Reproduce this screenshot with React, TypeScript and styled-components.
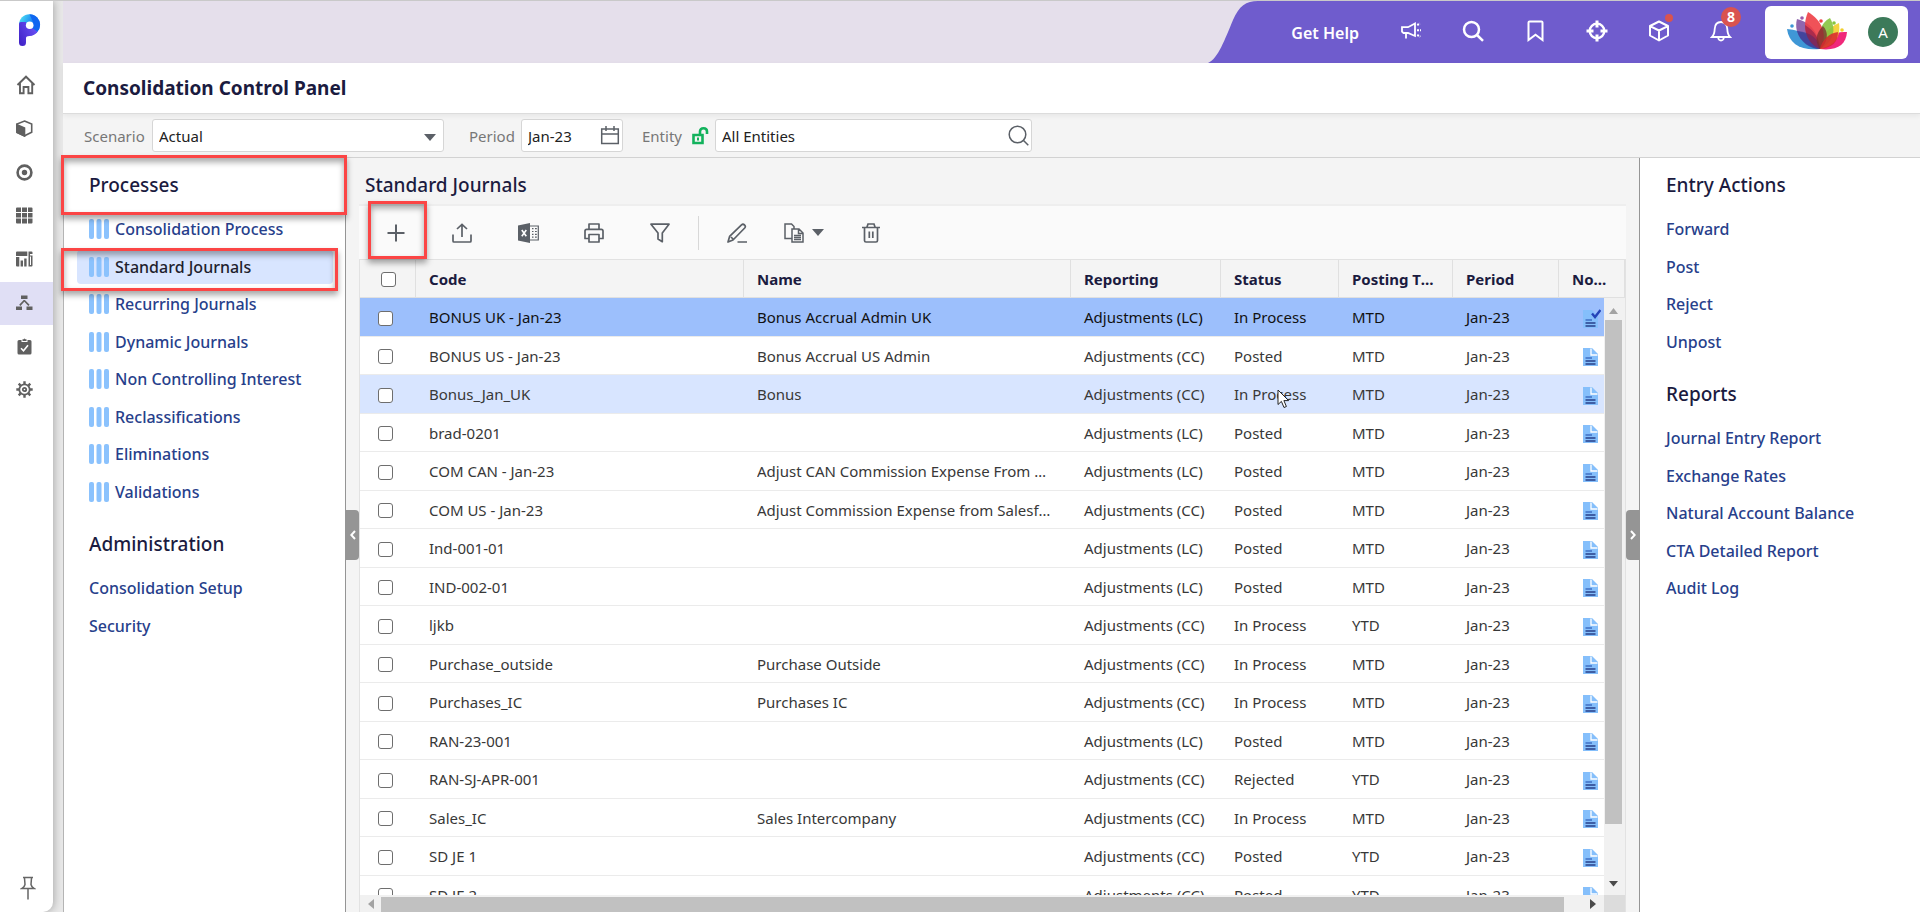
import React from "react";
import styled, { createGlobalStyle, css } from "styled-components";

const GlobalStyle = createGlobalStyle`
  *, *::before, *::after { box-sizing: border-box; }
  body {
    margin: 0;
    background: #f4f4f4;
    font-family: "Noto Sans", "Open Sans", sans-serif;
    font-size: 15px;
    color: #333;
  }
  button, input, select { font: inherit; color: inherit; }
  h1, h2, ul { margin: 0; padding: 0; }
`;

/* ---------- shell ---------- */

const Shell = styled.div`
  display: flex;
  height: 100vh;
  overflow: hidden;
  border-top: 1px solid #c9c9c9;
  background: #e8e8e8;
`;

const Rail = styled.nav`
  display: flex;
  flex-direction: column;
  flex: none;
  width: 53px;
  margin-right: 10px;
  background: #fff;
  border-bottom-right-radius: 10px;
  box-shadow: 1px 0 8px rgba(0, 0, 0, 0.28);
  z-index: 1;
`;

const LogoLink = styled.a`
  display: flex;
  height: 63px;
  padding: 13px 0 0 19px;
`;

const RailList = styled.ul`
  flex: 1;
  list-style: none;
`;

const RailItem = styled.li<{ $active?: boolean }>`
  height: 44px;
  background: ${(p) => (p.$active ? "#e0dff5" : "transparent")};
  &:nth-child(even) { height: 43px; }
`;

const RailLink = styled.a`
  display: flex;
  align-items: center;
  height: 100%;
  padding: 0 0 2px 16px;
  color: #606060;
`;

const PinButton = styled.button`
  display: flex;
  margin: 0 0 12px 20px;
  padding: 0;
  width: 16px;
  border: 0;
  background: none;
  color: #666;
`;

const Page = styled.div`
  display: flex;
  flex-direction: column;
  flex: 1;
  min-width: 0;
`;

/* ---------- banner ---------- */

const Banner = styled.header`
  display: flex;
  flex: none;
  justify-content: flex-end;
  height: 62px;
  background: #e5dfeb;
`;

const Wave = styled.svg`
  flex: none;
  width: 50px;
  height: 62px;
  fill: #6f5ccd;
`;

const BannerTools = styled.div`
  display: flex;
  align-items: center;
  background: #6f5ccd;
  padding: 0 12px 0 34px;
  margin-left: -1px;
  color: #fff;
`;

const HelpLink = styled.a`
  margin-right: 21px;
  color: #fff;
  font-size: 16px;
  font-weight: 600;
  text-decoration: none;
  white-space: nowrap;
  padding-top: 2px;
`;

const BannerButton = styled.button`
  position: relative;
  display: flex;
  align-items: center;
  justify-content: center;
  width: 62px;
  height: 62px;
  padding: 0 0 2px;
  border: 0;
  background: none;
  color: #fff;
`;

const Dot = styled.span`
  position: absolute;
  top: 13px;
  left: 37px;
  width: 8px;
  height: 8px;
  border-radius: 50%;
  background: #d9534f;
`;

const Badge = styled.span`
  position: absolute;
  top: 6px;
  left: 31px;
  width: 20px;
  height: 20px;
  border-radius: 50%;
  background: #d9534f;
  font-size: 14px;
  line-height: 20px;
  font-weight: 700;
  text-align: center;
`;

const AccountCard = styled.div`
  display: flex;
  align-items: center;
  width: 143px;
  height: 53px;
  margin-left: 13px;
  padding-left: 22px;
  gap: 19px;
  background: #fff;
  border-radius: 6px;
`;

const Avatar = styled.button`
  width: 30px;
  height: 30px;
  padding: 0;
  border: 0;
  border-radius: 50%;
  background: #3c7a5a;
  color: #fff;
  font-size: 15px;
`;

/* ---------- title and filters ---------- */

const TitleBar = styled.div`
  flex: none;
  display: flex;
  align-items: center;
  height: 51px;
  padding-left: 20px;
  background: #fff;
  border-bottom: 1px solid #dcdcdc;
  box-shadow: 0 2px 5px rgba(0, 0, 0, 0.06);
  z-index: 1;
`;

const Title = styled.h1`
  font-size: 19px;
  line-height: 26px;
  font-weight: 700;
  color: #1b1b3f;
`;

const FilterBar = styled.form`
  flex: none;
  display: flex;
  align-items: center;
  height: 44px;
  padding-left: 21px;
  background: #f4f4f4;
  border-bottom: 1px solid #d2d2d2;
`;

const FilterLabel = styled.label<{ $width: number; $before?: number }>`
  width: ${(p) => p.$width}px;
  margin-left: ${(p) => p.$before ?? 0}px;
  color: #777;
  white-space: nowrap;
`;

const Field = styled.div<{ $width: number }>`
  position: relative;
  width: ${(p) => p.$width}px;
  height: 33px;
  color: #5b6067;
  > svg { position: absolute; right: 3px; top: 6px; pointer-events: none; }
  > svg.caret { right: 8px; top: 15px; }
`;

const fieldBox = css`
  width: 100%;
  height: 100%;
  padding: 0 6px;
  border: 1px solid #d6d6d6;
  border-radius: 3px;
  background: #fff;
  color: #222;
  appearance: none;
  outline: none;
`;
const Select = styled.select`${fieldBox}`;
const TextInput = styled.input`${fieldBox}`;

const LockButton = styled.button`
  display: flex;
  width: 23px;
  padding: 0;
  border: 0;
  background: none;
`;

/* ---------- work area ---------- */

const Work = styled.div`
  display: flex;
  flex: 1;
  min-height: 0;
  border-left: 1px solid #b4b4b4;
`;

const SidePanel = styled.aside<{ $side: "left" | "right" }>`
  flex: none;
  width: ${(p) => (p.$side === "left" ? 282 : 281)}px;
  padding-top: 2px;
  background: #fff;
  ${(p) => (p.$side === "left" ? "border-right" : "border-left")}: 1px solid #959595;
`;

const Section = styled.section<{ $indent: number }>`
  margin-bottom: 9px;
  --indent: ${(p) => p.$indent}px;
`;

const SectionTitle = styled.h2`
  position: relative;
  padding-left: var(--indent);
  font-size: 19px;
  line-height: 50px;
  font-weight: 500;
  color: #1b1b3f;
`;

const LinkList = styled.ul`
  list-style: none;
`;

const LinkItem = styled.li`
  position: relative;
  height: 38px;
  padding: 2px 12px 0 13px;
  &:nth-child(even) { height: 37px; }
`;

const ProcessLink = styled.a<{ $active?: boolean; $inset: number }>`
  display: flex;
  align-items: center;
  gap: 6px;
  height: 34px;
  padding-left: ${(p) => p.$inset}px;
  border-radius: 4px;
  background: ${(p) => (p.$active ? "#d8e5ff" : "transparent")};
  color: ${(p) => (p.$active ? "#1f1f2e" : "#27408b")};
  font-size: 16px;
  line-height: 22px;
  font-weight: 500;
  text-decoration: none;
  white-space: nowrap;
`;

const Highlight = styled.span<{ $inset: string }>`
  position: absolute;
  inset: ${(p) => p.$inset};
  border: 3px solid #fb4545;
  box-shadow: 0 4px 6px rgba(0, 0, 0, 0.35), inset 0 4px 6px rgba(0, 0, 0, 0.35);
  pointer-events: none;
  z-index: 2;
`;

const Gutter = styled.div`
  flex: none;
  display: flex;
  align-items: center;
  width: 13px;
  background: #f4f4f4;
`;

const GutterHandle = styled.button<{ $side: "left" | "right" }>`
  display: flex;
  align-items: center;
  justify-content: center;
  width: 13px;
  height: 50px;
  padding: 0;
  border: 0;
  border-radius: ${(p) => (p.$side === "left" ? "0 4px 4px 0" : "4px 0 0 4px")};
  background: #959595;
  color: #fff;
`;

const Center = styled.main`
  display: flex;
  flex-direction: column;
  flex: 1;
  min-width: 0;
  background: #f4f4f4;
`;

const CenterTitle = styled.h2`
  flex: none;
  padding: 2px 0 0 6px;
  height: 46px;
  font-size: 19px;
  line-height: 50px;
  font-weight: 500;
  color: #1b1b3f;
`;

const Toolbar = styled.div`
  flex: none;
  display: flex;
  align-items: center;
  height: 55px;
  padding-left: 4px;
  background: #fafafa;
  border-top: 2px solid #eee;
`;

const ToolButton = styled.button<{ $wide?: boolean }>`
  position: relative;
  display: flex;
  align-items: center;
  justify-content: center;
  gap: 8px;
  width: ${(p) => (p.$wide ? 68 : 66)}px;
  height: 52px;
  padding: 0;
  border: 0;
  background: none;
  color: #5b6067;
`;

const ToolDivider = styled.span`
  width: 1px;
  height: 34px;
  margin: 0 5px;
  background: #d8d8d8;
`;

/* ---------- grid ---------- */

const Grid = styled.div`
  flex: 1;
  min-height: 0;
  display: flex;
  flex-direction: column;
  border: 1px solid #e2e2e2;
  border-bottom: 0;
`;

const Table = styled.table`
  width: 100%;
  table-layout: fixed;
  border-collapse: separate;
  border-spacing: 0;
`;

const HeadCell = styled.th`
  height: 38px;
  padding: 0 12px 0 13px;
  border-right: 1px solid #e0e0e0;
  border-bottom: 1px solid #e0e0e0;
  font-weight: 700;
  font-size: 15px;
  line-height: 22px;
  text-align: left;
  color: #1b1b3f;
  overflow: hidden;
  text-overflow: ellipsis;
  white-space: nowrap;
`;

const BodyCell = styled.td`
  position: relative;
  padding: 0 12px 0 13px;
  border-bottom: 1px solid #ebebeb;
  line-height: 22px;
  white-space: nowrap;
`;

const Clip = styled.div`
  margin-right: 6px;
  overflow: hidden;
  text-overflow: ellipsis;
`;

const Row = styled.tr<{ $tone?: "selected" | "hover" }>`
  height: 39px;
  background: ${(p) => (p.$tone === "selected" ? "#9cbffc" : p.$tone === "hover" ? "#d8e5ff" : "#fff")};
  color: ${(p) => (p.$tone === "selected" ? "#111" : "#383838")};
  &:nth-child(even) { height: 38px; }
`;

const Check = styled.input<{ $shift: number }>`
  display: block;
  width: 15px;
  height: 15px;
  margin: 2px 0 0 ${(p) => p.$shift}px;
  appearance: none;
  border: 1px solid #6e6e6e;
  border-radius: 3px;
  background: #fff;
`;

const NoteButton = styled.button`
  display: flex;
  margin: 3px 0 0 11px;
  padding: 0;
  border: 0;
  background: none;
`;

const Pointer = styled.svg`
  position: absolute;
  left: 56px;
  top: 14px;
`;

const GridBody = styled.div`
  flex: 1;
  min-height: 0;
  display: flex;
`;

const Viewport = styled.div`
  flex: 1;
  min-width: 0;
  overflow: hidden;
  background: #fff;
`;

const Track = styled.div<{ $vertical?: boolean }>`
  flex: none;
  display: flex;
  align-items: center;
  flex-direction: ${(p) => (p.$vertical ? "column" : "row")};
  ${(p) => (p.$vertical ? "width: 21px; padding: 10px 3px 0 1px;" : "height: 17px; flex: 1;")}
  background: #f1f1f1;
`;

const Thumb = styled.div<{ $vertical?: boolean }>`
  flex: ${(p) => (p.$vertical ? "505" : "1184")};
  ${(p) => (p.$vertical ? "width: 17px; margin-top: 6px;" : "height: 15px; margin-top: 2px;")}
  background: #c1c1c1;
`;

const Rest = styled.div<{ $size: number }>`
  flex: ${(p) => p.$size};
`;

const ArrowBox = styled.span<{ $w: number; $h: number }>`
  flex: none;
  display: flex;
  align-items: center;
  justify-content: center;
  width: ${(p) => p.$w}px;
  height: ${(p) => p.$h}px;
`;

const BottomBar = styled.div`
  flex: none;
  display: flex;
`;

const Corner = styled.div`
  width: 21px;
  background: #dcdcdc;
`;

/* ---------- icons ---------- */

type IconProps = { w?: number; h?: number; box?: string; sw?: number; fill?: string; children: React.ReactNode };
const Icon = ({ w = 20, h = 20, box, sw = 1.5, fill = "none", children }: IconProps) => (
  <svg width={w} height={h} viewBox={box ?? `0 0 ${w} ${h}`} fill={fill} stroke={fill === "none" ? "currentColor" : "none"} strokeWidth={sw} aria-hidden="true">
    {children}
  </svg>
);
const Solid = (p: IconProps) => <Icon fill="currentColor" {...p} />;

const Logo = () => (
  <svg width="22" height="32" viewBox="0 0 22 32" aria-hidden="true">
    <defs>
      <linearGradient id="bowl" x1="0" y1="0.2" x2="1" y2="0.7">
        <stop offset="0" stopColor="#4fe3f2" />
        <stop offset="0.5" stopColor="#1f8df5" />
        <stop offset="1" stopColor="#1257ee" />
      </linearGradient>
      <linearGradient id="stem" x1="0" y1="1" x2="1" y2="0.3">
        <stop offset="0" stopColor="#3d1fc4" />
        <stop offset="1" stopColor="#6b52f5" />
      </linearGradient>
    </defs>
    <circle cx="10.5" cy="10.8" r="10.6" fill="url(#bowl)" />
    <path d="M10.5 0.2 A10.6 10.6 0 0 1 18 18 L13 13.5 L14 8 Z" fill="#0f66f0" />
    <path d="M0 10 Q0 8 2 8 H7 V11 A4 4 0 0 0 13 14 L18.6 17.8 A10.6 10.6 0 0 1 10.5 22 Q7 22 7 24 V28.5 Q7 32 3.5 32 Q0 32 0 28.5Z" fill="url(#stem)" />
    <circle cx="10.7" cy="11.2" r="3.8" fill="#fff" />
  </svg>
);

const Lotus = () => (
  <svg width="62" height="40" viewBox="0 0 62 40" role="img" aria-label="Company logo">
    <path d="M0 17 C2 32 14 39 33 37 C28 26 16 18 0 17Z" fill="#3f97d6" />
    <path d="M60 20 C47 19 37 26 33 37 C50 39 59 33 60 20Z" fill="#f0287a" />
    <path d="M10 7 C6 22 17 35 33 37 C33 22 23 10 10 7Z" fill="#7d4ba0" opacity="0.85" />
    <path d="M52 11 C40 16 33 26 33 37 C48 34 54 24 52 11Z" fill="#f2cf2e" opacity="0.9" />
    <path d="M43 6 C34 10 28 26 33 37 C46 30 50 18 43 6Z" fill="#86c440" opacity="0.9" />
    <path d="M21 0 C14 16 20 30 33 37 C42 22 34 8 21 0Z" fill="#ee3f46" opacity="0.9" />
    <path d="M10 19 C13 30 23 37 33 37 C32 28 25 20 10 19Z" fill="#2c3c97" opacity="0.7" />
    <path d="M18 13 C18 26 25 34 33 37 C33 28 28 19 18 13Z" fill="#8c1f4a" opacity="0.65" />
    <path d="M36 14 C28 22 28 30 33 37 C41 31 42 20 36 14Z" fill="#7a2f2e" opacity="0.75" />
    <path d="M51 20 C42 21 35 28 33 37 C45 36 51 30 51 20Z" fill="#d9262e" opacity="0.85" />
    <circle cx="5" cy="14" r="1.8" fill="#3f97d6" />
    <circle cx="15" cy="6" r="1.8" fill="#9a5cab" />
    <circle cx="34" cy="9" r="1.8" fill="#ee3f46" />
    <circle cx="47" cy="11" r="1.8" fill="#86c440" />
    <circle cx="55" cy="18" r="1.8" fill="#f2cf2e" />
  </svg>
);

const Bars = () => (
  <svg width="20" height="20" viewBox="0 0 20 20" fill="#8bc2fd" aria-hidden="true">
    <rect x="0" width="5" height="20" rx="2" />
    <rect x="7.5" width="5" height="20" rx="2" />
    <rect x="15" width="5" height="20" rx="2" />
  </svg>
);

const NoteIcon = ({ checked }: { checked?: boolean }) => (
  <svg width="18" height="20" viewBox="0 0 18 20" aria-hidden="true">
    <path d="M0 1 H9 L15 7 V19 H0Z" fill="#85bffb" />
    {!checked && <path d="M8 1.5 V8 H14.5" fill="none" stroke="#fff" strokeWidth="1.3" />}
    <path d="M2.5 11 H9" stroke="#3f6fc4" strokeWidth="1.5" />
    <path d="M2.5 14 H12.5 M2.5 17 H12.5" stroke="#27408b" strokeWidth="1.5" />
    {checked && <path d="M9 4.5 L12 8 L17.5 1" fill="none" stroke="#2545b8" strokeWidth="2.4" />}
  </svg>
);

const Caret = ({ className }: { className?: string }) => (
  <svg className={className} width="12" height="7" viewBox="0 0 12 7" fill="#5b6067" aria-hidden="true">
    <path d="M0 0 H12 L6 7Z" />
  </svg>
);

const railIcons: { label: string; icon: React.ReactNode }[] = [
  { label: "Home", icon: <Icon w={20} h={20} sw={1.9}><path d="M1.5 10 L10 1.7 L18.5 10 M4 8 V18.2 H7.6 V12 H12.4 V18.2 H16.2 V8" /></Icon> },
  { label: "Models", icon: <Icon w={17} h={17} sw={1.6}><path d="M8.5 1 L15.7 4 V12.3 L8.5 15.8 L1 12.3 V4Z" /><path d="M0.5 4.5 L8.5 8 V16 L1 12.5Z" fill="currentColor" /></Icon> },
  { label: "Goals", icon: <Icon w={17} h={17} sw={2.6}><circle cx="8.5" cy="8.5" r="6.9" /><circle cx="8.5" cy="8.5" r="2.7" fill="currentColor" stroke="none" /></Icon> },
  { label: "Sheets", icon: <Solid w={17} h={17}><path d="M0 1.5Q0 .5 1 .5H5V5H0ZM6 .5H11V5H6ZM12 .5H15.5Q16.5 .5 16.5 1.5V5H12ZM0 6H5V10.5H0ZM6 6H11V10.5H6ZM12 6H16.5V10.5H12ZM0 11.5H5V16.5H1Q0 16.5 0 15.5ZM6 11.5H11V16.5H6ZM12 11.5H16.5V15.5Q16.5 16.5 15.5 16.5H12Z" /></Solid> },
  { label: "Dashboards", icon: <Solid w={17} h={16}><path d="M0 1.5Q0 .5 1 .5H11.3V5H0ZM0 6H3.3V15.5H1Q0 15.5 0 14.5ZM4.6 9.5H7V15.5H4.6ZM8.2 7.5H10.6V15.5H8.2ZM12.5 .5H15.5Q16.5 .5 16.5 1.5V3H14V15.5H12.5ZM14 4.5H16.5V14.5Q16.5 15.5 15.5 15.5H14V14H15V5.5H14Z" /></Solid> },
  { label: "Consolidation", icon: <Solid w={17} h={16}><path d="M5 .5H11.5V4H5ZM0 11.5H6V15H0ZM10.5 11.5H16.5V15H10.5Z" /><path d="M8.3 5.5 L13 10.3 M8.3 5.5 L3.8 10.3" stroke="currentColor" strokeWidth="1.7" /></Solid> },
  { label: "Tasks", icon: <Solid w={17} h={17}><path d="M2.5 2H5.5V4H11.5V2H14Q15.5 2 15.5 3.5V15Q15.5 16.5 14 16.5H3Q1.5 16.5 1.5 15V3.5Q1.5 2 3 2ZM6.5 3V1.2H7.7Q8.5-.2 9.3 1.2H10.5V3Z" /><path d="M5 10.3 L7.5 12.8 L12 7.3" stroke="#fff" strokeWidth="1.6" fill="none" /></Solid> },
  {
    label: "Settings",
    icon: (
      <Icon w={17} h={17} sw={1.8}>
        <circle cx="8.5" cy="8.5" r="5.2" />
        <circle cx="8.5" cy="8.5" r="1.7" />
        <path strokeWidth="2.4" d="M8.5 .3V3M8.5 14V16.7M.3 8.5H3M14 8.5H16.7M2.7 2.7L4.6 4.6M12.4 12.4L14.3 14.3M2.7 14.3L4.6 12.4M12.4 4.6L14.3 2.7" />
      </Icon>
    ),
  },
];

const bannerIcons: { label: string; icon: React.ReactNode; extra?: React.ReactNode }[] = [
  { label: "Announcements", icon: <Icon w={22} h={18} sw={1.8}><path d="M2 5.2 H8 L15 1.5 V14 L8 11 H3.5 L2 9.6Z M6 11 V16.5" /><path strokeWidth="2" strokeDasharray="2 1" d="M17.2 3 L20 1.5 M17 8.2 H21 M17.2 13 L20.4 14.6" /></Icon> },
  { label: "Search", icon: <Icon w={22} h={22} sw={2.5}><circle cx="9.5" cy="9.5" r="7.5" /><path d="M15 15 L21 20.8" /></Icon> },
  { label: "Bookmarks", icon: <Icon w={17} h={22} sw={2}><path d="M1.5 20 V2.5 Q1.5 1.5 2.5 1.5 H14.5 Q15.5 1.5 15.5 2.5 V20 L8.5 14.8Z" /></Icon> },
  { label: "Target", icon: <Icon w={22} h={22} sw={2.3}><circle cx="11" cy="11" r="7.3" /><path strokeWidth="3" d="M11 .5V7.5M11 14.5V21.5M.5 11H7.5M14.5 11H21.5" /></Icon> },
  { label: "Packages", icon: <Icon w={22} h={22} sw={2}><path strokeLinejoin="round" d="M11 1.5 L20 6 V15.5 L11 20.5 L2 15.5 V6Z M2.5 6.3 L11 10.5 L19.5 6.3 M11 10.5 V20" /></Icon>, extra: <Dot /> },
  { label: "Notifications", icon: <Icon w={22} h={22} sw={1.8}><path d="M2 17 Q4.5 14.5 4.7 9 Q5 2 11 2 Q17 2 17.3 9 Q17.5 14.5 20 17Z M8.2 17.5 Q8.5 20.5 11 20.5 Q13.5 20.5 13.8 17.5" /></Icon>, extra: <Badge>8</Badge> },
];

/* ---------- data ---------- */

const processes = ["Consolidation Process", "Standard Journals", "Recurring Journals", "Dynamic Journals", "Non Controlling Interest", "Reclassifications", "Eliminations", "Validations"];
const administration = ["Consolidation Setup", "Security"];
const entryActions = ["Forward", "Post", "Reject", "Unpost"];
const reports = ["Journal Entry Report", "Exchange Rates", "Natural Account Balance", "CTA Detailed Report", "Audit Log"];

const columnWidths = [56, 328, undefined, 150, 118, 114, 106];
const headings = ["Code", "Name", "Reporting", "Status", "Posting Type", "Period", "Notes"];

const journals: string[][] = [
  ["BONUS UK - Jan-23", "Bonus Accrual Admin UK", "LC", "In Process", "MTD"],
  ["BONUS US - Jan-23", "Bonus Accrual US Admin", "CC", "Posted", "MTD"],
  ["Bonus_Jan_UK", "Bonus", "CC", "In Process", "MTD"],
  ["brad-0201", "", "LC", "Posted", "MTD"],
  ["COM CAN - Jan-23", "Adjust CAN Commission Expense From Sales", "LC", "Posted", "MTD"],
  ["COM US - Jan-23", "Adjust Commission Expense from Salesforce", "CC", "Posted", "MTD"],
  ["Ind-001-01", "", "LC", "Posted", "MTD"],
  ["IND-002-01", "", "LC", "Posted", "MTD"],
  ["ljkb", "", "CC", "In Process", "YTD"],
  ["Purchase_outside", "Purchase Outside", "CC", "In Process", "MTD"],
  ["Purchases_IC", "Purchases IC", "CC", "In Process", "MTD"],
  ["RAN-23-001", "", "LC", "Posted", "MTD"],
  ["RAN-SJ-APR-001", "", "CC", "Rejected", "YTD"],
  ["Sales_IC", "Sales Intercompany", "CC", "In Process", "MTD"],
  ["SD JE 1", "", "CC", "Posted", "YTD"],
  ["SD JE 2", "", "CC", "Posted", "YTD"],
];

/* ---------- pieces ---------- */

const Columns = ({ last }: { last: number }) => (
  <colgroup>
    {[...columnWidths, last].map((w, i) => (
      <col key={i} width={w} />
    ))}
  </colgroup>
);

type LinkSectionProps = { title: string; items: string[]; indent: number; bars?: boolean; active?: string; marked?: boolean };
const LinkSection = ({ title, items, indent, bars, active, marked }: LinkSectionProps) => (
  <Section $indent={indent}>
    <SectionTitle>
      {title}
      {marked && <Highlight $inset="-5px -2px -5px -3px" />}
    </SectionTitle>
    <LinkList>
      {items.map((item) => (
        <LinkItem key={item}>
          <ProcessLink href="#" $active={item === active} $inset={indent - 13}>
            {bars && <Bars />}
            {item}
          </ProcessLink>
          {item === active && <Highlight $inset="0 7px -6px -3px" />}
        </LinkItem>
      ))}
    </LinkList>
  </Section>
);

const JournalGrid = () => (
  <Grid>
    <Table>
      <Columns last={66} />
      <thead>
        <tr>
          <HeadCell><Check type="checkbox" aria-label="Select all" $shift={8} /></HeadCell>
          {headings.map((h) => <HeadCell key={h}>{h}</HeadCell>)}
        </tr>
      </thead>
    </Table>
    <GridBody>
      <Viewport>
        <Table>
          <Columns last={45} />
          <tbody>
            {journals.map(([code, name, ledger, status, posting], i) => (
              <Row key={code} $tone={i === 0 ? "selected" : i === 2 ? "hover" : undefined}>
                <BodyCell><Check type="checkbox" aria-label={`Select ${code}`} $shift={5} /></BodyCell>
                <BodyCell><Clip>{code}</Clip></BodyCell>
                <BodyCell><Clip>{name}</Clip></BodyCell>
                <BodyCell>Adjustments ({ledger})</BodyCell>
                <BodyCell>
                  {status}
                  {i === 2 && (
                    <Pointer width="13" height="20" viewBox="0 0 13 20" aria-hidden="true">
                      <path d="M1 1 V15.5 L4.4 12.4 L7 18.5 L9.4 17.5 L6.9 11.6 H11.6Z" fill="#fff" stroke="#222" strokeWidth="1" />
                    </Pointer>
                  )}
                </BodyCell>
                <BodyCell>{posting}</BodyCell>
                <BodyCell>Jan-23</BodyCell>
                <BodyCell><NoteButton aria-label={`Notes for ${code}`}><NoteIcon checked={i === 0} /></NoteButton></BodyCell>
              </Row>
            ))}
          </tbody>
        </Table>
      </Viewport>
      <Track $vertical>
        <svg width="9" height="6" viewBox="0 0 9 6" fill="#a3a3a3" aria-hidden="true"><path d="M4.5 0 L9 6 H0Z" /></svg>
        <Thumb $vertical />
        <Rest $size={49} />
        <ArrowBox $w={16} $h={22}>
          <svg width="9" height="6" viewBox="0 0 9 6" fill="#4a4a4a" aria-hidden="true"><path d="M0 0 H9 L4.5 5.5Z" /></svg>
        </ArrowBox>
      </Track>
    </GridBody>
    <BottomBar>
      <Track>
        <ArrowBox $w={21} $h={17}>
          <svg width="6" height="10" viewBox="0 0 6 10" fill="#a3a3a3" aria-hidden="true"><path d="M6 0 V10 L0 5Z" /></svg>
        </ArrowBox>
        <Thumb />
        <Rest $size={18} />
        <ArrowBox $w={22} $h={17}>
          <svg width="6" height="10" viewBox="0 0 6 10" fill="#4a4a4a" aria-hidden="true"><path d="M0 0 V10 L6 5Z" /></svg>
        </ArrowBox>
      </Track>
      <Corner />
    </BottomBar>
  </Grid>
);

export default function App() {
  return (
    <>
      <GlobalStyle />
      <Shell>
        <Rail aria-label="Main">
          <LogoLink href="#" aria-label="Start page"><Logo /></LogoLink>
          <RailList>
            {railIcons.map(({ label, icon }) => (
              <RailItem key={label} $active={label === "Consolidation"}>
                <RailLink href="#" aria-label={label}>{icon}</RailLink>
              </RailItem>
            ))}
          </RailList>
          <PinButton aria-label="Pin menu">
            <Icon w={16} h={24} sw={1.5}><path d="M3 1.5 H13 M4.5 2 L5 8.5 Q4.5 11 2 12.5 H14 Q11.5 11 11 8.5 L11.5 2 M8 13 V23.5" /></Icon>
          </PinButton>
        </Rail>

        <Page>
          <Banner>
            <Wave viewBox="0 0 50 62" preserveAspectRatio="none" aria-hidden="true">
              <path d="M0 62 C10 58 17 38 25 19 C31 5 38 0 50 0 V62Z" />
            </Wave>
            <BannerTools>
              <HelpLink href="#">Get Help</HelpLink>
              {bannerIcons.map(({ label, icon, extra }) => (
                <BannerButton key={label} aria-label={label}>{icon}{extra}</BannerButton>
              ))}
              <AccountCard>
                <Lotus />
                <Avatar aria-label="Account">A</Avatar>
              </AccountCard>
            </BannerTools>
          </Banner>

          <TitleBar><Title>Consolidation Control Panel</Title></TitleBar>

          <FilterBar>
            <FilterLabel htmlFor="scenario" $width={68}>Scenario</FilterLabel>
            <Field $width={292}>
              <Select id="scenario" defaultValue="Actual"><option>Actual</option></Select>
              <Caret className="caret" />
            </Field>
            <FilterLabel htmlFor="period" $width={52} $before={25}>Period</FilterLabel>
            <Field $width={102}>
              <TextInput id="period" defaultValue="Jan-23" />
              <Icon><path d="M1.7 4 H18.3 V18.5 H1.7Z M1.7 9 H18.3 M6 1 V6 M14 1 V6" /></Icon>
            </Field>
            <FilterLabel htmlFor="entity" $width={50} $before={19}>Entity</FilterLabel>
            <LockButton type="button" aria-label="Entity unlocked">
              <svg width="17" height="20" viewBox="0 0 17 20" fill="none" stroke="#12b25c" strokeWidth="2.6" aria-hidden="true">
                <path d="M1.5 9 H10.5 V17 H1.5Z M8 8.5 V5.5 Q8 2.3 11.5 2.3 Q15 2.3 15 5.5 V8" />
                <path d="M6 11.5 V14.5" strokeWidth="2" />
              </svg>
            </LockButton>
            <Field $width={317}>
              <TextInput id="entity" defaultValue="All Entities" />
              <Icon w={21} h={21}><circle cx="9.5" cy="9.5" r="8.3" /><path d="M15.3 15.3 L20.3 20.3" /></Icon>
            </Field>
          </FilterBar>

          <Work>
            <SidePanel $side="left">
              <LinkSection title="Processes" items={processes} indent={25} bars active="Standard Journals" marked />
              <LinkSection title="Administration" items={administration} indent={25} />
            </SidePanel>
            <Gutter>
              <GutterHandle $side="left" aria-label="Collapse left panel">
                <Icon w={6} h={10} sw={2}><path d="M5 1 L1.3 5 L5 9" /></Icon>
              </GutterHandle>
            </Gutter>

            <Center>
              <CenterTitle>Standard Journals</CenterTitle>
              <Toolbar>
                <ToolButton aria-label="Add">
                  <Icon w={18} h={18} sw={2}><path d="M9 0.5 V17.5 M.5 9 H17.5" /></Icon>
                  <Highlight $inset="-6px 2px 0 5px" />
                </ToolButton>
                <ToolButton aria-label="Export">
                  <Icon sw={1.7}><path d="M1 11.5 V18 Q1 19 2 19 H18 Q19 19 19 18 V11.5 M10 14 V1.5 M5 6 L10 1.3 L15 6" /></Icon>
                </ToolButton>
                <ToolButton aria-label="Export to Excel">
                  <Icon w={21} h={20} sw={1.2}>
                    <path d="M0 2.5 L12 0 V20 L0 17.5Z" fill="currentColor" stroke="none" />
                    <path d="M12 3 H20.3 V17 H12 M14 5.7 H15.5 M17 5.7 H18.8 M14 8.5 H15.5 M17 8.5 H18.8 M14 11.3 H15.5 M17 11.3 H18.8 M14 14.2 H15.5 M17 14.2 H18.8" />
                    <path d="M3.8 7 L8.3 13.2 M8.3 7 L3.8 13.2" stroke="#fff" strokeWidth="1.6" />
                  </Icon>
                </ToolButton>
                <ToolButton aria-label="Print">
                  <Icon sw={1.7}><path strokeLinejoin="round" d="M5 6 V1 H15 V6 M5 15.5 H1 V8 Q1 6.3 2.7 6.3 H17.3 Q19 6.3 19 8 V15.5 H15 M5 11.5 H15 V19 H5Z" /></Icon>
                </ToolButton>
                <ToolButton aria-label="Filter">
                  <Icon sw={1.7}><path strokeLinejoin="round" d="M1 1.2 H19 L12.3 10 V18.7 L8 16 V10Z" /></Icon>
                </ToolButton>
                <ToolDivider />
                <ToolButton aria-label="Edit">
                  <Icon sw={1.7}><path strokeLinejoin="round" d="M1 19 L2.6 13.4 L14.5 1.8 Q16 .6 17.6 2 Q19 3.5 17.7 5 L6 17Z M4 14 L6 16 M10.5 19 H20" /></Icon>
                </ToolButton>
                <ToolButton aria-label="Copy" $wide>
                  <Icon sw={1.5}><path d="M7.5 15.5 H1 V1 H7.5 L10 3.5 V6 M8 6 H15 L19 10 V19 H8Z M14.5 6.5 V10.5 H18.5 M10 12.5 H17 M10 14.5 H17 M10 16.5 H17" /></Icon>
                  <Caret />
                </ToolButton>
                <ToolButton aria-label="Delete">
                  <Icon w={18} h={20} sw={1.7}><path d="M0 4.5 H18 M2.5 4.5 V17.5 Q2.5 19 4 19 H14 Q15.5 19 15.5 17.5 V4.5 M5 4 L6 1 H12 L13 4 M7.3 8.5 V15 M10.8 8.5 V15" /></Icon>
                </ToolButton>
              </Toolbar>
              <JournalGrid />
            </Center>

            <Gutter>
              <GutterHandle $side="right" aria-label="Collapse right panel">
                <Icon w={6} h={10} sw={2}><path d="M1 1 L4.7 5 L1 9" /></Icon>
              </GutterHandle>
            </Gutter>
            <SidePanel $side="right">
              <LinkSection title="Entry Actions" items={entryActions} indent={26} />
              <LinkSection title="Reports" items={reports} indent={26} />
            </SidePanel>
          </Work>
        </Page>
      </Shell>
    </>
  );
}
